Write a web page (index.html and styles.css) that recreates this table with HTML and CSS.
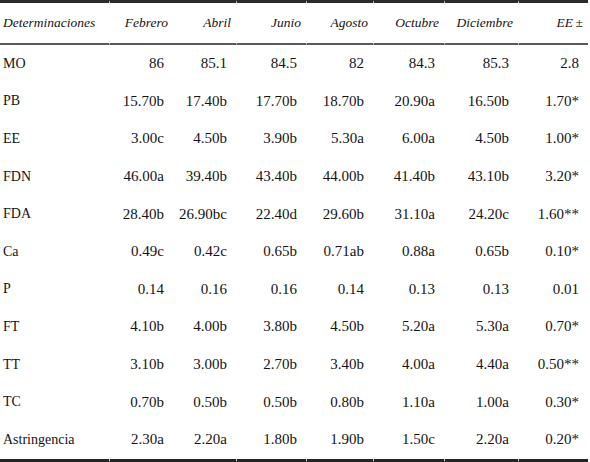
FILE: index.html
```html
<!DOCTYPE html>
<html lang="es">
<head>
<meta charset="utf-8">
<link rel="stylesheet" href="styles.css">
</head>
<body>
<table class="tbl">
  <colgroup>
    <col class="c1"><col class="c2"><col class="c3"><col class="c4"><col class="c5"><col class="c6"><col class="c7"><col class="c8">
  </colgroup>
  <thead>
    <tr>
      <th class="lab">Determinaciones</th>
      <th class="g">Febrero</th>
      <th>Abril</th>
      <th class="g">Junio</th>
      <th class="g">Agosto</th>
      <th class="g">Octubre</th>
      <th class="g">Diciembre</th>
      <th class="g">EE&#8201;±</th>
    </tr>
  </thead>
  <tbody>
    <tr><td class="lab">MO</td><td class="g">86</td><td>85.1</td><td class="g">84.5</td><td class="g">82</td><td class="g">84.3</td><td class="g">85.3</td><td class="g">2.8</td></tr>
    <tr><td class="lab">PB</td><td class="g">15.70b</td><td>17.40b</td><td class="g">17.70b</td><td class="g">18.70b</td><td class="g">20.90a</td><td class="g">16.50b</td><td class="g">1.70*</td></tr>
    <tr><td class="lab">EE</td><td class="g">3.00c</td><td>4.50b</td><td class="g">3.90b</td><td class="g">5.30a</td><td class="g">6.00a</td><td class="g">4.50b</td><td class="g">1.00*</td></tr>
    <tr><td class="lab">FDN</td><td class="g">46.00a</td><td>39.40b</td><td class="g">43.40b</td><td class="g">44.00b</td><td class="g">41.40b</td><td class="g">43.10b</td><td class="g">3.20*</td></tr>
    <tr><td class="lab">FDA</td><td class="g">28.40b</td><td>26.90bc</td><td class="g">22.40d</td><td class="g">29.60b</td><td class="g">31.10a</td><td class="g">24.20c</td><td class="g">1.60**</td></tr>
    <tr><td class="lab">Ca</td><td class="g">0.49c</td><td>0.42c</td><td class="g">0.65b</td><td class="g">0.71ab</td><td class="g">0.88a</td><td class="g">0.65b</td><td class="g">0.10*</td></tr>
    <tr><td class="lab">P</td><td class="g">0.14</td><td>0.16</td><td class="g">0.16</td><td class="g">0.14</td><td class="g">0.13</td><td class="g">0.13</td><td class="g">0.01</td></tr>
    <tr><td class="lab">FT</td><td class="g">4.10b</td><td>4.00b</td><td class="g">3.80b</td><td class="g">4.50b</td><td class="g">5.20a</td><td class="g">5.30a</td><td class="g">0.70*</td></tr>
    <tr><td class="lab">TT</td><td class="g">3.10b</td><td>3.00b</td><td class="g">2.70b</td><td class="g">3.40b</td><td class="g">4.00a</td><td class="g">4.40a</td><td class="g">0.50**</td></tr>
    <tr><td class="lab">TC</td><td class="g">0.70b</td><td>0.50b</td><td class="g">0.50b</td><td class="g">0.80b</td><td class="g">1.10a</td><td class="g">1.00a</td><td class="g">0.30*</td></tr>
    <tr class="last"><td class="lab">Astringencia</td><td class="g">2.30a</td><td>2.20a</td><td class="g">1.80b</td><td class="g">1.90b</td><td class="g">1.50c</td><td class="g">2.20a</td><td class="g">0.20*</td></tr>
  </tbody>
</table>
</body>
</html>
```

FILE: styles.css
```css
html, body {
  margin: 0;
  padding: 0;
  background: #fff;
}

.tbl {
  border-collapse: separate;
  border-spacing: 0;
  table-layout: fixed;
  width: 588px;
  font-family: "Liberation Serif", "DejaVu Serif", serif;
  color: #161314;
}

.c1 { width: 109px; }
.c2 { width: 64px; }
.c3 { width: 63px; }
.c4 { width: 70px; }
.c5 { width: 67px; }
.c6 { width: 71px; }
.c7 { width: 74px; }
.c8 { width: 70px; }

.tbl th {
  font-weight: normal;
  font-style: italic;
  font-size: 13.5px;
  height: 39px;
  padding: 0 5px 1px 0;
  text-align: right;
  vertical-align: middle;
  border-top: 3px solid #2b2b2b;
  border-bottom: 2px solid #5a5a5a;
}

.tbl td {
  font-size: 15px;
  height: 37.6px;
  padding: 0 9px 0 0;
  text-align: right;
  vertical-align: middle;
}

.tbl td.lab {
  font-size: 14px;
}

.tbl .lab {
  text-align: left;
  padding-left: 3px;
}

.tbl .g {
  border-left: 1px solid #fff;
}

.tbl tr.last td {
  border-bottom: 4px solid #232323;
}
```
